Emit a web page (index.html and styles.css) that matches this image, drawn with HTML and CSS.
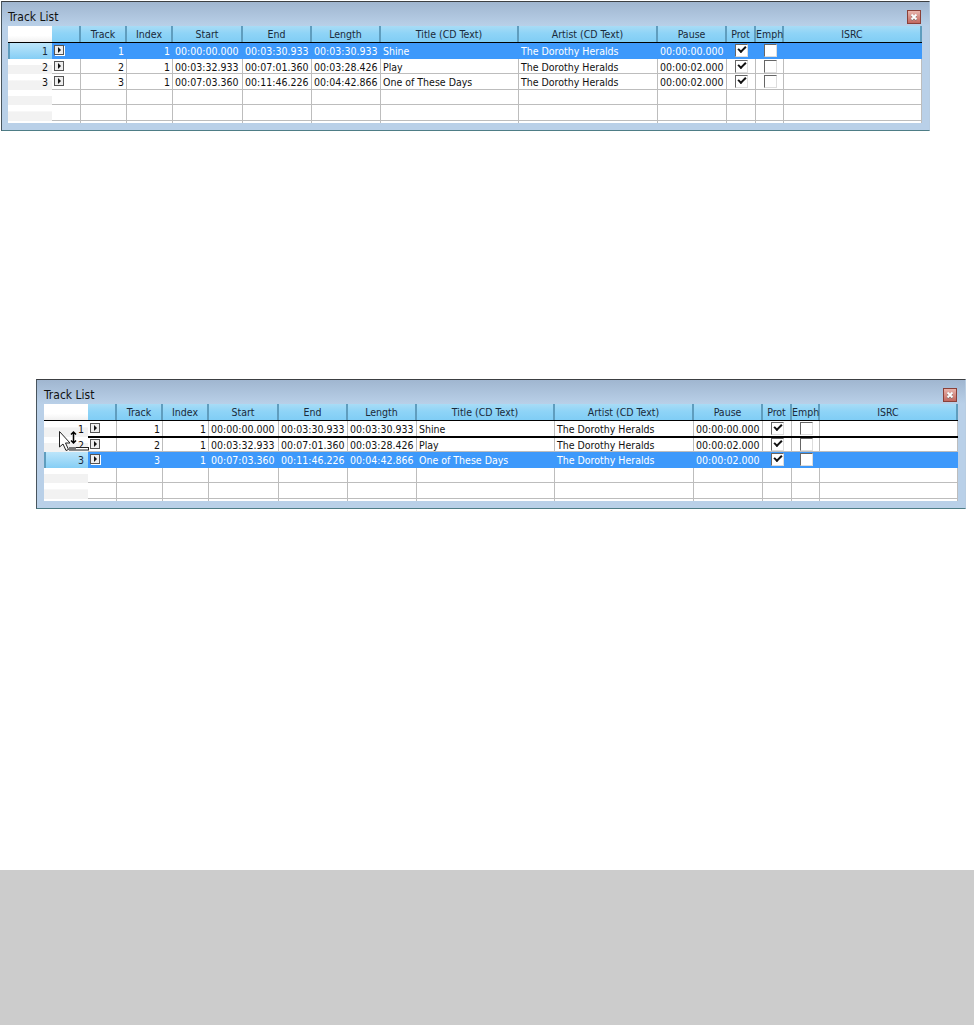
FILE: index.html
```html
<!DOCTYPE html>
<html>
<head>
<meta charset="utf-8">
<title>Track List</title>
<link rel="stylesheet" href="styles.css">
</head>
<body>
<main class="page">
  <section class="window first">
    <div class="titlebar"><span class="title">Track List</span><span class="close"><svg width="12" height="12" viewBox="0 0 12 12"><path d="M3.500 4l5 5M8.500 4l-5 5" stroke="#555" stroke-width="2"/><path d="M3.500 3.500l5 5M8.500 3.500l-5 5" stroke="#fff" stroke-width="2"/></svg></span></div>
    <div class="grid">
      <div class="row head"><div class="corner"></div><div></div><div>Track</div><div>Index</div><div>Start</div><div>End</div><div>Length</div><div>Title (CD Text)</div><div>Artist (CD Text)</div><div>Pause</div><div>Prot</div><div>Emph</div><div>ISRC</div></div>
      <div class="row data sel"><div class="rh">1</div><div class="pl"><span class="play"></span></div><div class="n">1</div><div class="n">1</div><div>00:00:00.000</div><div>00:03:30.933</div><div>00:03:30.933</div><div>Shine</div><div>The Dorothy Heralds</div><div>00:00:00.000</div><div class="c"><span class="box on"></span></div><div class="c"><span class="box"></span></div><div></div></div>
      <div class="row data"><div class="rh">2</div><div class="pl"><span class="play"></span></div><div class="n">2</div><div class="n">1</div><div>00:03:32.933</div><div>00:07:01.360</div><div>00:03:28.426</div><div>Play</div><div>The Dorothy Heralds</div><div>00:00:02.000</div><div class="c"><span class="box on"></span></div><div class="c"><span class="box"></span></div><div></div></div>
      <div class="row data"><div class="rh">3</div><div class="pl"><span class="play"></span></div><div class="n">3</div><div class="n">1</div><div>00:07:03.360</div><div>00:11:46.226</div><div>00:04:42.866</div><div>One of These Days</div><div>The Dorothy Heralds</div><div>00:00:02.000</div><div class="c"><span class="box on"></span></div><div class="c"><span class="box"></span></div><div></div></div>
      <div class="row data"><div class="rh"></div><div></div><div></div><div></div><div></div><div></div><div></div><div></div><div></div><div></div><div></div><div></div><div></div></div>
      <div class="row data"><div class="rh"></div><div></div><div></div><div></div><div></div><div></div><div></div><div></div><div></div><div></div><div></div><div></div><div></div></div>
      <div class="row data"><div class="rh"></div><div></div><div></div><div></div><div></div><div></div><div></div><div></div><div></div><div></div><div></div><div></div><div></div></div>
    </div>
  </section>

  <section class="window second">
    <div class="titlebar"><span class="title">Track List</span><span class="close"><svg width="12" height="12" viewBox="0 0 12 12"><path d="M3.500 4l5 5M8.500 4l-5 5" stroke="#555" stroke-width="2"/><path d="M3.500 3.500l5 5M8.500 3.500l-5 5" stroke="#fff" stroke-width="2"/></svg></span></div>
    <div class="grid">
      <div class="row head"><div class="corner"></div><div></div><div>Track</div><div>Index</div><div>Start</div><div>End</div><div>Length</div><div>Title (CD Text)</div><div>Artist (CD Text)</div><div>Pause</div><div>Prot</div><div>Emph</div><div>ISRC</div></div>
      <div class="row data"><div class="rh">1</div><div class="pl"><span class="play"></span></div><div class="n">1</div><div class="n">1</div><div>00:00:00.000</div><div>00:03:30.933</div><div>00:03:30.933</div><div>Shine</div><div>The Dorothy Heralds</div><div>00:00:00.000</div><div class="c"><span class="box on"></span></div><div class="c"><span class="box"></span></div><div></div></div>
      <div class="row data"><div class="rh">2</div><div class="pl"><span class="play"></span></div><div class="n">2</div><div class="n">1</div><div>00:03:32.933</div><div>00:07:01.360</div><div>00:03:28.426</div><div>Play</div><div>The Dorothy Heralds</div><div>00:00:02.000</div><div class="c"><span class="box on"></span></div><div class="c"><span class="box"></span></div><div></div></div>
      <div class="row data sel"><div class="rh">3</div><div class="pl"><span class="play"></span></div><div class="n">3</div><div class="n">1</div><div>00:07:03.360</div><div>00:11:46.226</div><div>00:04:42.866</div><div>One of These Days</div><div>The Dorothy Heralds</div><div>00:00:02.000</div><div class="c"><span class="box on"></span></div><div class="c"><span class="box"></span></div><div></div></div>
      <div class="row data"><div class="rh"></div><div></div><div></div><div></div><div></div><div></div><div></div><div></div><div></div><div></div><div></div><div></div><div></div></div>
      <div class="row data"><div class="rh"></div><div></div><div></div><div></div><div></div><div></div><div></div><div></div><div></div><div></div><div></div><div></div><div></div></div>
      <div class="row data"><div class="rh"></div><div></div><div></div><div></div><div></div><div></div><div></div><div></div><div></div><div></div><div></div><div></div><div></div></div>
      <div class="dragline"></div>
      <svg class="cursor" width="36" height="24" viewBox="0 0 36 24"><path d="M1.500 1.500V17l3.500-3 3 6.500 2.500-1-3-6.500h4.500z" fill="#fff" stroke="#222"/><path d="M15.500 2v11M13 4.500l2.500-2.500 2.500 2.500M13 10.500l2.500 2.500 2.500-2.500" fill="none" stroke="#000" stroke-width="1.500"/><rect x="11.500" y="17.500" width="19" height="2.500" fill="#fff" stroke="#222"/><path d="M11 17h7v3h-7z" fill="#777"/></svg>
    </div>
  </section>
</main>
<footer class="band"></footer>
</body>
</html>
```
FILE: styles.css
```css
html, body { margin: 0; padding: 0; background: #fff; }
body { width: 974px; height: 1025px; overflow: hidden; font-family: "DejaVu Sans Condensed", "Liberation Sans", Arial, sans-serif; position: relative; }
.page { height: 870px; box-sizing: border-box; padding-top: 1px; }
.window { width: 929px; height: 130px; box-sizing: border-box; border: 1px solid #3c3f42; border-right-color: #b8cde2; border-bottom-color: #4e7d86; border-left-color: #48555e; background: linear-gradient(#a0b6d0, #b9d0e8 24px, #b9d0e8); padding: 0 7px 0 6px; }
.first { margin: 0 0 0 1px; }
.second { margin: 248px 0 0 36px; width: 930px; padding-left: 7px; }
.titlebar { height: 24px; display: flex; justify-content: space-between; align-items: center; padding: 5px 1px 0 0; box-sizing: border-box; }
.title { font-size: 12px; color: #111; }
.close { width: 12px; height: 12px; box-sizing: content-box; border: 1px solid #8a4038; background: linear-gradient(#e8b4ac, #c2685f); display: block; }
.close svg { display: block; }
.grid { position: relative; width: 914px; height: 97px; background: #fff; overflow: hidden; }
.row { display: grid; grid-template-columns: 44px 29px 46px 46px 70px 69px 69px 138px 139px 69px 29px 28px 138px; font-size: 10.500px; color: #111; }
.head { height: 17px; border-bottom: 1px solid #000; box-sizing: border-box; }
.head > div { text-align: center; line-height: 16px; background: linear-gradient(#a8dcf6, #8fd4f7 45%, #80cdf5); border-right: 2px solid #5f9dbe; box-sizing: border-box; white-space: nowrap; color: #1a2a3a; }
.head > .corner { background: linear-gradient(#fff, #fff 60%, #f0f0f0); border-right: 0; }
.data { height: 15.500px; }
.data > div { border-right: 1px solid #bdbdbd; border-bottom: 1px solid #bdbdbd; box-sizing: border-box; padding-left: 2px; line-height: 16px; white-space: nowrap; overflow: hidden; }
.data > .rh { border: 0; background: linear-gradient(#fff, #fff 40%, #f2f2f2 41%, #f2f2f2); text-align: right; padding: 0 4px 0 0; }
.data > .n { text-align: right; padding: 0 2px 0 0; }
.data > .pl { padding: 2px 0 0 2px; }
.data > .c { padding: 1px 0 0 8px; }
.sel > div { background: #3d99fb; color: #fff; border-color: #3d99fb; }
.sel > .rh { background: linear-gradient(#bce5fa, #a7dcf8 40%, #85cef5); color: #1a2a3a; box-shadow: inset 2px 0 0 #5f9dbe; }
.play { display: block; width: 8px; height: 8px; border: 1px solid #555; background: #eee; box-shadow: 1px 1px 0 #fff; position: relative; }
.play::after { content: ""; position: absolute; left: 3px; top: 1px; border-left: 3px solid #111; border-top: 3px solid transparent; border-bottom: 3px solid transparent; }
.box { display: block; width: 11px; height: 11px; border: 1px solid #666; border-right-color: #ddd; border-bottom-color: #ddd; background: #fff; position: relative; }
.on::after { content: ""; position: absolute; left: 2px; top: 1px; width: 6px; height: 3px; border-left: 2px solid #111; border-bottom: 2px solid #111; transform: rotate(-45deg); }
.dragline { position: absolute; left: 44px; right: 0; top: 32px; height: 2px; background: #000; }
.cursor { position: absolute; left: 14px; top: 26px; }
.band { height: 155px; background: #ccc; }
```
